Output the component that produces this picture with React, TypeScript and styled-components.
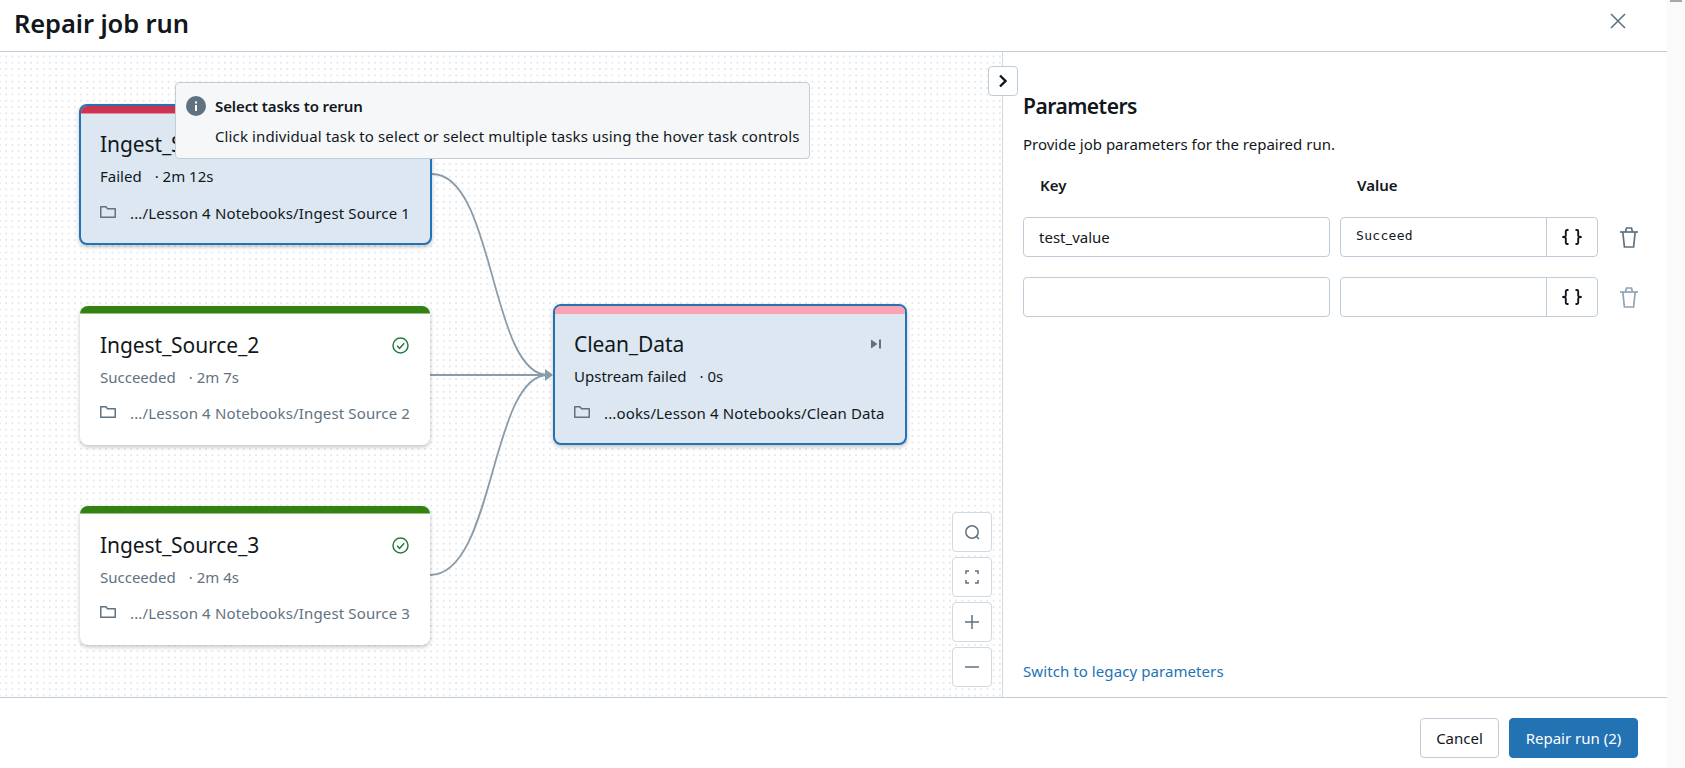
import React from "react";
import styled, { createGlobalStyle } from "styled-components";

const Global = createGlobalStyle`
  html, body { margin: 0; padding: 0; height: 100%; background: #fafafa; overflow: hidden; }
  body { font-family: "Noto Sans", "Open Sans", "Liberation Sans", sans-serif; color: #11171c; }
  * { box-sizing: border-box; }
`;

const Page = styled.div`
  display: flex;
  width: 1685px;
  height: 768px;
`;
const Modal = styled.div`
  width: 1667px;
  height: 768px;
  background: #fff;
  display: flex;
  flex-direction: column;
`;
const Strip = styled.div`
  flex: 1;
  background: #fafafa;
  display: flex;
  justify-content: center;
  align-items: flex-start;
`;
const Thumb = styled.div`
  width: 12px;
  height: 2px;
  background: #a8a8a8;
`;
const Header = styled.header`
  height: 52px;
  flex: none;
  border-bottom: 1px solid #c0cdd8;
  display: flex;
  align-items: flex-start;
  justify-content: space-between;
  padding: 0 41px 0 14px;
`;
const Title = styled.h1`
  margin: 0;
  font-size: 25.5px;
  font-weight: 600;
  line-height: 46px;
  letter-spacing: -0.1px;
`;
const CloseBtn = styled.div`
  display: flex;
  color: #5f7281;
  padding-top: 13px;
`;
const Body = styled.div`
  flex: 1;
  display: flex;
  min-height: 0;
`;
const Canvas = styled.div`
  position: relative;
  width: 1003px;
  flex: none;
  border-right: 1px solid #d1d9e1;
  background-color: #fff;
  background-image: radial-gradient(circle at 1px 1px, #e3e7eb 0.9px, transparent 1.15px);
  background-size: 6.25px 6.33px;
  background-position: -1px 3.5px;
`;
const Edges = styled.svg`
  position: absolute;
  left: 0;
  top: -52px;
  width: 1003px;
  height: 768px;
  pointer-events: none;
`;
const Card = styled.div<{ $x: number; $y: number; $w: number; $selected?: boolean }>`
  position: absolute;
  left: ${(p) => p.$x}px;
  top: ${(p) => p.$y - 52}px;
  width: ${(p) => p.$w}px;
  height: ${(p) => (p.$selected ? 141 : 139)}px;
  border-radius: 8px;
  overflow: hidden;
  background: ${(p) => (p.$selected ? "#dce7f2" : "#fff")};
  border: ${(p) => (p.$selected ? "2px solid #2272b4" : "none")};
  box-shadow: 0 2px 4px rgba(31, 39, 45, 0.28);
  display: flex;
  flex-direction: column;
`;
const Stripe = styled.div<{ $color: string; $edge: string }>`
  height: 8px;
  flex: none;
  background: ${(p) => p.$color};
  border-bottom: 1px solid ${(p) => p.$edge};
`;
const CardBody = styled.div<{ $selected?: boolean }>`
  padding: ${(p) => (p.$selected ? "14px 24px 0 19px" : "15px 21px 0 20px")};
  display: flex;
  flex-direction: column;
`;
const TitleRow = styled.div`
  display: flex;
  justify-content: space-between;
  align-items: center;
  height: 32px;
`;
const CardTitle = styled.div`
  font-size: 21px;
  line-height: 32px;
  letter-spacing: -0.1px;
  white-space: nowrap;
`;
const Status = styled.div<{ $muted?: boolean }>`
  font-size: 15px;
  line-height: 20px;
  margin-top: 6px;
  color: ${(p) => (p.$muted ? "#5f7281" : "#11171c")};
  white-space: nowrap;
`;
const Duration = styled.span`
  margin-left: 13px;
`;
const PathRow = styled.div<{ $selected?: boolean }>`
  display: flex;
  align-items: center;
  margin-top: ${(p) => (p.$selected ? 17 : 16)}px;
  height: 20px;
  white-space: nowrap;
`;
const PathIcon = styled.span`
  display: flex;
  width: 30px;
  flex: none;
  color: #5f7281;
  margin-top: -2px;
`;
const PathText = styled.span<{ $muted?: boolean }>`
  font-size: 15px;
  letter-spacing: 0.14px;
  color: ${(p) => (p.$muted ? "#5f7281" : "#11171c")};
`;
const Tip = styled.div`
  position: absolute;
  left: 175px;
  top: 30px;
  width: 635px;
  height: 77px;
  background: #f6f7f9;
  border: 1px solid #c0cdd8;
  border-radius: 4px;
  padding: 13px 10px 0 10px;
  display: grid;
  grid-template-columns: 20px 1fr;
  align-content: start;
  column-gap: 9px;
  row-gap: 10px;
`;
const TipIcon = styled.span`
  display: flex;
  align-items: center;
  color: #5f7281;
`;
const TipTitle = styled.div`
  font-size: 15px;
  font-weight: 600;
  line-height: 20px;
  letter-spacing: -0.1px;
`;
const TipText = styled.div`
  grid-column: 2;
  font-size: 15px;
  line-height: 20px;
  letter-spacing: 0.12px;
  white-space: nowrap;
`;
const Collapse = styled.button`
  position: absolute;
  left: 988px;
  top: 14px;
  width: 30px;
  height: 30px;
  border: 1px solid #c0cdd8;
  border-radius: 4px;
  background: #fff;
  padding: 0;
  display: flex;
  align-items: center;
  justify-content: center;
  z-index: 3;
  color: #11171c;
`;
const Controls = styled.div`
  position: absolute;
  left: 952px;
  top: 460px;
  display: flex;
  flex-direction: column;
  gap: 5px;
`;
const ControlBtn = styled.button`
  width: 40px;
  height: 40px;
  border: 1px solid #d1d9e1;
  border-radius: 4px;
  background: #fff;
  padding: 0;
  display: flex;
  align-items: center;
  justify-content: center;
  color: #5f7281;
`;
const Panel = styled.div`
  flex: 1;
  padding: 38px 0 0 20px;
  display: flex;
  flex-direction: column;
`;
const PanelTitle = styled.h2`
  margin: 0;
  font-size: 21px;
  font-weight: 600;
  line-height: 32px;
  letter-spacing: -0.5px;
`;
const PanelDesc = styled.p`
  margin: 12px 0 0;
  font-size: 15px;
  line-height: 20px;
  white-space: nowrap;
`;
const Labels = styled.div`
  display: grid;
  grid-template-columns: 307px 258px;
  column-gap: 10px;
  margin-top: 21px;
  margin-bottom: 22px;
`;
const Grid = styled.div`
  display: grid;
  grid-template-columns: 307px 258px 60px;
  column-gap: 10px;
  row-gap: 20px;
  align-items: center;
`;
const ColLabel = styled.div`
  font-size: 15px;
  font-weight: 600;
  line-height: 20px;
  padding-left: 17px;
`;
const Field = styled.div`
  height: 40px;
  border: 1px solid #c0cdd8;
  border-radius: 4px;
  background: #fff;
  display: flex;
  align-items: center;
  overflow: hidden;
`;
const KeyText = styled.span`
  padding-left: 15px;
  font-size: 15px;
`;
const ValueCell = styled.span`
  flex: 1;
  padding: 0 0 3px 15px;
  font-family: "DejaVu Sans Mono", "Liberation Mono", monospace;
  font-size: 13px;
  letter-spacing: 0.3px;
`;
const BraceCell = styled.span`
  width: 51px;
  height: 100%;
  border-left: 1px solid #c0cdd8;
  display: flex;
  align-items: center;
  justify-content: center;
  margin-left: auto;
`;
const Trash = styled.span<{ $faded?: boolean }>`
  display: flex;
  padding-left: 12px;
  color: ${(p) => (p.$faded ? "#92a4b3" : "#5f7281")};
`;
const Spacer = styled.div`
  flex: 1;
`;
const Link = styled.a`
  font-size: 15px;
  line-height: 20px;
  letter-spacing: 0.08px;
  color: #2272b4;
  margin-bottom: 16px;
`;
const Footer = styled.footer`
  height: 71px;
  flex: none;
  border-top: 1px solid #c0cdd8;
  display: flex;
  justify-content: flex-end;
  gap: 10px;
  padding: 20px 29px 0 0;
`;
const Btn = styled.button<{ $primary?: boolean }>`
  height: 40px;
  width: ${(p) => (p.$primary ? 129 : 79)}px;
  border-radius: 4px;
  font-family: inherit;
  font-size: 15px;
  padding: 0;
  border: 1px solid ${(p) => (p.$primary ? "#2272b4" : "#c0cdd8")};
  background: ${(p) => (p.$primary ? "#2272b4" : "#fff")};
  color: ${(p) => (p.$primary ? "#fff" : "#11171c")};
`;
const ActionIcon = styled.span`
  display: flex;
  color: #5f7281;
`;

const Folder = () => (
  <svg width="16" height="12" viewBox="0 0 16 12" fill="none" stroke="currentColor" strokeWidth="1.5">
    <path d="M.75 11.25V.75h5.2l1.6 2h7.7v8.5z" strokeLinejoin="round" />
  </svg>
);
const Check = () => (
  <svg width="17" height="17" viewBox="0 0 17 17" fill="none" stroke="#277c43" strokeWidth="1.5">
    <circle cx="8.5" cy="8.5" r="7.5" />
    <path d="M5 8.7l2.6 2.6L12.2 6.3" />
  </svg>
);
const SkipIcon = () => (
  <svg width="10" height="10" viewBox="0 0 10 10" fill="#5f7281">
    <path d="M0 .5l6.5 4.5L0 9.5z" />
    <rect x="8" y="0.5" width="2" height="9" />
  </svg>
);
const InfoIcon = () => (
  <svg width="20" height="20" viewBox="0 0 20 20">
    <circle cx="10" cy="10" r="10" fill="#5f7281" />
    <rect x="9" y="9" width="2" height="6" fill="#fff" />
    <rect x="9" y="5.5" width="2" height="2" fill="#fff" />
  </svg>
);
const Braces = () => (
  <svg width="20" height="16" viewBox="0 0 20 16" fill="none" stroke="#11171c" strokeWidth="1.9">
    <path d="M6.5 1H5a1.2 1.2 0 0 0-1.2 1.2v3.6A2 2 0 0 1 1 8a2 2 0 0 1 2.8 2.2v3.6A1.2 1.2 0 0 0 5 15h1.5" />
    <path d="M13.5 1H15a1.2 1.2 0 0 1 1.2 1.2v3.6A2 2 0 0 0 19 8a2 2 0 0 0-2.8 2.2v3.6A1.2 1.2 0 0 1 15 15h-1.5" />
  </svg>
);
const TrashIcon = () => (
  <svg width="18" height="21" viewBox="0 0 18 21" fill="none" stroke="currentColor" strokeWidth="1.7">
    <path d="M0 5h18" />
    <path d="M5.5 5l1-4h5l1 4" />
    <path d="M2.8 5l1.6 15h9.2l1.6-15" />
  </svg>
);
const SearchIcon = () => (
  <svg width="15" height="15" viewBox="0 0 15 15" fill="none" stroke="currentColor" strokeWidth="1.5">
    <circle cx="7" cy="7" r="6.2" />
    <path d="M11 11l3 3" />
  </svg>
);
const FitIcon = () => (
  <svg width="14" height="14" viewBox="0 0 14 14" fill="none" stroke="currentColor" strokeWidth="1.5">
    <path d="M1 4V1h3M10 1h3v3M13 10v3h-3M4 13H1v-3" />
  </svg>
);
const PlusIcon = () => (
  <svg width="14" height="14" viewBox="0 0 14 14" fill="none" stroke="currentColor" strokeWidth="1.5">
    <path d="M0 7h14M7 0v14" />
  </svg>
);
const MinusIcon = () => (
  <svg width="14" height="2" viewBox="0 0 14 2" fill="none" stroke="currentColor" strokeWidth="1.5">
    <path d="M0 1h14" />
  </svg>
);

type TaskProps = {
  x: number;
  y: number;
  w: number;
  selected?: boolean;
  stripe: string;
  edge: string;
  title: string;
  status: string;
  duration: string;
  path: string;
  icon?: React.ReactNode;
};

const Task = ({ x, y, w, selected, stripe, edge, title, status, duration, path, icon }: TaskProps) => (
  <Card $x={x} $y={y} $w={w} $selected={selected}>
    <Stripe $color={stripe} $edge={edge} />
    <CardBody $selected={selected}>
      <TitleRow>
        <CardTitle>{title}</CardTitle>
        {icon && <ActionIcon>{icon}</ActionIcon>}
      </TitleRow>
      <Status $muted={!selected}>
        {status}
        <Duration>· {duration}</Duration>
      </Status>
      <PathRow $selected={selected}>
        <PathIcon>
          <Folder />
        </PathIcon>
        <PathText $muted={!selected}>{path}</PathText>
      </PathRow>
    </CardBody>
  </Card>
);

const EDGE = "#8a9cab";

export default function App() {
  return (
    <Page>
      <Global />
      <Modal>
        <Header>
          <Title>Repair job run</Title>
          <CloseBtn>
            <svg width="16" height="16" viewBox="0 0 16 16" fill="none" stroke="currentColor" strokeWidth="1.6">
              <path d="M1 1l14 14M15 1L1 15" />
            </svg>
          </CloseBtn>
        </Header>
        <Body>
          <Canvas>
            <Edges viewBox="0 0 1003 768" fill="none" stroke={EDGE} strokeWidth="1.8">
              <path d="M432 174C495 174 490 375 548 375" />
              <path d="M430 375H548" />
              <path d="M430 575C495 575 490 375 548 375" />
              <path d="M545 369l8 6-8 6z" fill={EDGE} stroke="none" />
            </Edges>
            <Task
              x={79}
              y={104}
              w={353}
              selected
              stripe="#cc3350"
              edge="#e88a9c"
              title="Ingest_Source_1"
              status="Failed"
              duration="2m 12s"
              path=".../Lesson 4 Notebooks/Ingest Source 1"
            />
            <Task
              x={80}
              y={306}
              w={350}
              stripe="#348012"
              edge="#8fc47a"
              title="Ingest_Source_2"
              status="Succeeded"
              duration="2m 7s"
              path=".../Lesson 4 Notebooks/Ingest Source 2"
              icon={<Check />}
            />
            <Task
              x={80}
              y={506}
              w={350}
              stripe="#348012"
              edge="#8fc47a"
              title="Ingest_Source_3"
              status="Succeeded"
              duration="2m 4s"
              path=".../Lesson 4 Notebooks/Ingest Source 3"
              icon={<Check />}
            />
            <Task
              x={553}
              y={304}
              w={354}
              selected
              stripe="#f9a3b3"
              edge="#f9a3b3"
              title="Clean_Data"
              status="Upstream failed"
              duration="0s"
              path="...ooks/Lesson 4 Notebooks/Clean Data"
              icon={<SkipIcon />}
            />
            <Tip>
              <TipIcon>
                <InfoIcon />
              </TipIcon>
              <TipTitle>Select tasks to rerun</TipTitle>
              <TipText>Click individual task to select or select multiple tasks using the hover task controls</TipText>
            </Tip>
            <Collapse aria-label="Collapse">
              <svg width="10" height="14" viewBox="0 0 10 14" fill="none" stroke="currentColor" strokeWidth="2.4">
                <path d="M2 1.5L7.5 7 2 12.5" />
              </svg>
            </Collapse>
            <Controls>
              <ControlBtn>
                <SearchIcon />
              </ControlBtn>
              <ControlBtn>
                <FitIcon />
              </ControlBtn>
              <ControlBtn>
                <PlusIcon />
              </ControlBtn>
              <ControlBtn>
                <MinusIcon />
              </ControlBtn>
            </Controls>
          </Canvas>
          <Panel>
            <PanelTitle>Parameters</PanelTitle>
            <PanelDesc>Provide job parameters for the repaired run.</PanelDesc>
            <Labels>
              <ColLabel>Key</ColLabel>
              <ColLabel>Value</ColLabel>
            </Labels>
            <Grid>
              <Field>
                <KeyText>test_value</KeyText>
              </Field>
              <Field>
                <ValueCell>Succeed</ValueCell>
                <BraceCell>
                  <Braces />
                </BraceCell>
              </Field>
              <Trash>
                <TrashIcon />
              </Trash>
              <Field />
              <Field>
                <BraceCell>
                  <Braces />
                </BraceCell>
              </Field>
              <Trash $faded>
                <TrashIcon />
              </Trash>
            </Grid>
            <Spacer />
            <Link>Switch to legacy parameters</Link>
          </Panel>
        </Body>
        <Footer>
          <Btn>Cancel</Btn>
          <Btn $primary>Repair run (2)</Btn>
        </Footer>
      </Modal>
      <Strip>
        <Thumb />
      </Strip>
    </Page>
  );
}
